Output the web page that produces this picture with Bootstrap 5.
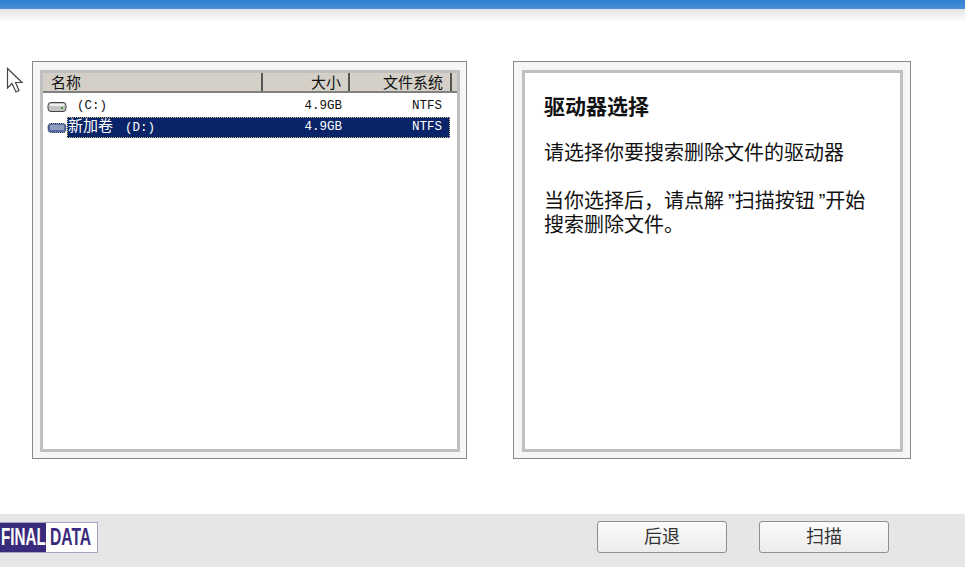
<!DOCTYPE html>
<html lang="zh-CN">
<head>
    <meta charset="UTF-8">
    <title>Final Data</title>
    <link href="https://cdn.jsdelivr.net/npm/bootstrap@5.3.0/dist/css/bootstrap.min.css" rel="stylesheet">
    <style>
        body {
            width: 965px;
            height: 567px;
            overflow: hidden;
            background: #fff;
            font-family: "Liberation Sans", "Noto Sans CJK SC", sans-serif;
            color: #111;
        }
        .title-strip { height: 9px; background: linear-gradient(#2f7fd0, #4b90da); }
        .title-fade { height: 13px; background: linear-gradient(#e4e4e4, #fff); }
        .work-area { height: 492px; padding: 39px 0 0 32px; gap: 46px; }
        .frame-box {
            height: 398px;
            border: 1px solid #8a8a8a;
            background: #f6f6f6;
            padding: 8px 6px 6px 7px;
        }
        .frame-left { width: 435px; }
        .frame-right { width: 398px; padding: 8px 7px 6px 8px; }
        .frame-inner { height: 100%; border: 3px solid #c0c0c0; background: #fff; }
        .head-row { height: 20px; background: #d4d0c8; border-bottom: 2px solid #808080; font-size: 15px; line-height: 19px; }
        .head-cell { border-right: 2px solid #555; padding: 0 7px 0 8px; }
        .cell-name { width: 220px; }
        .cell-size { width: 87px; }
        .cell-fs { width: 102px; }
        .drive-row { height: 21px; font-family: "Liberation Mono", "Noto Sans CJK SC", monospace; font-size: 12.5px; line-height: 21px; padding-left: 4px; }
        .row-plain { margin-top: 3px; }
        .drive-icon { width: 20px; flex: none; }
        .drive-label { width: 383px; height: 21px; }
        .lbl-name { width: 195px; padding-left: 10px; white-space: pre; }
        .lbl-size { width: 80px; }
        .lbl-fs { width: 108px; padding-right: 8px; }
        .cjk-text { font-size: 15px; line-height: 1; margin-right: 4.5px; font-family: "Noto Sans CJK SC", sans-serif; }
        .row-picked .drive-label { background: #0a246a; color: #fff; outline: 1px dotted #c8b878; outline-offset: -1px; }
        .row-picked .lbl-name { padding-left: 1px; }
        .info-pane { padding: 22px 26px 22px 19px; font-size: 20px; line-height: 24px; }
        .info-pane h1 { font-size: 21px; line-height: 24px; font-weight: 700; margin-bottom: 22px; }
        .info-pane p { margin-bottom: 24px; }
        .footer-bar { height: 53px; background: #e6e6e6; padding-top: 8px; }
        .brand-mark { height: 31px; width: 98px; border: 1px solid #a79fc6; border-left: 0; font-weight: 700; font-size: 23px; line-height: 29px; overflow: hidden; }
        .brand-dark { width: 46px; background: #3a2a7c; color: #fff; justify-content: flex-end; }
        .brand-dark span { flex: none; transform: scaleX(.66); transform-origin: right center; }
        .brand-light { width: 51px; background: #fff; color: #3a2a7c; padding-left: 4px; }
        .brand-light span { flex: none; transform: scaleX(.68); transform-origin: left center; }
        .btn-wizard {
            width: 130px;
            height: 32px;
            padding: 0;
            border: 1px solid #8e8e8e;
            border-radius: 3px;
            background: linear-gradient(#fbfbfb, #ececec);
            font-size: 18px;
            line-height: 28px;
            color: #333;
        }
        .btn-group-wizard { gap: 32px; margin-right: 76px; margin-top: -1px; }
        .mouse-pointer { position: absolute; left: 6px; top: 67px; }
    </style>
</head>
<body>
    <div class="title-strip"></div>
    <div class="title-fade"></div>

    <!-- mouse cursor lying over the page -->
    <svg class="mouse-pointer" width="18" height="28" viewBox="0 0 18 28">
        <path d="M1.5 1.5 V21 L6 16.5 L10 25 L13 23.5 L9.5 15.5 H16 Z" fill="#fff" stroke="#444" stroke-width="1.2"/>
    </svg>

    <div class="work-area d-flex">
        <div class="frame-box frame-left">
            <div class="frame-inner">
                <div class="head-row d-flex">
                    <div class="head-cell cell-name">名称</div>
                    <div class="head-cell cell-size text-end">大小</div>
                    <div class="head-cell cell-fs text-end">文件系统</div>
                </div>
                <div class="drive-row row-plain d-flex align-items-center">
                    <svg class="drive-icon" height="12" viewBox="0 0 20 12">
                        <rect x="1" y="1.5" width="18" height="9" rx="3" fill="#c4c4c4" stroke="#444"/>
                        <rect x="3" y="3" width="14" height="2" fill="#eee"/>
                        <rect x="14" y="6" width="2" height="2" fill="#3a9a3a"/>
                    </svg>
                    <div class="drive-label d-flex">
                        <div class="lbl-name">(C:)</div>
                        <div class="lbl-size text-end">4.9GB</div>
                        <div class="lbl-fs text-end">NTFS</div>
                    </div>
                </div>
                <div class="drive-row row-picked d-flex align-items-center">
                    <svg class="drive-icon" height="12" viewBox="0 0 20 12">
                        <rect x="1" y="1.5" width="18" height="9" rx="3" fill="#5a6a9c" stroke="#1c2a5c" stroke-dasharray="1 1"/>
                        <rect x="3" y="3" width="14" height="5" fill="#8f9cc0"/>
                    </svg>
                    <div class="drive-label d-flex">
                        <div class="lbl-name"><span class="cjk-text">新加卷</span> (D:)</div>
                        <div class="lbl-size text-end">4.9GB</div>
                        <div class="lbl-fs text-end">NTFS</div>
                    </div>
                </div>
            </div>
        </div>

        <div class="frame-box frame-right">
            <div class="frame-inner info-pane">
                <h1>驱动器选择</h1>
                <p>请选择你要搜索删除文件的驱动器</p>
                <p>当你选择后，请点解&thinsp;”扫描按钮&thinsp;”开始搜索删除文件。</p>
            </div>
        </div>
    </div>

    <div class="footer-bar d-flex justify-content-between">
        <div class="brand-mark d-flex">
            <div class="brand-dark d-flex"><span>FINAL</span></div>
            <div class="brand-light d-flex"><span>DATA</span></div>
        </div>
        <div class="btn-group-wizard d-flex">
            <button type="button" class="btn btn-wizard">后退</button>
            <button type="button" class="btn btn-wizard">扫描</button>
        </div>
    </div>

    <script src="https://cdn.jsdelivr.net/npm/bootstrap@5.3.0/dist/js/bootstrap.bundle.min.js"></script>
</body>
</html>
